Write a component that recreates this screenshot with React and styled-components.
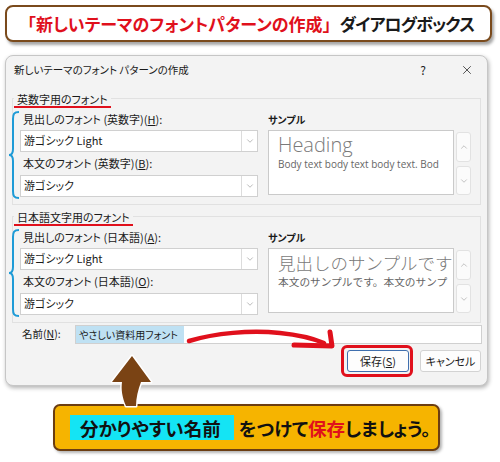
import React from 'react';
import styled, { createGlobalStyle } from 'styled-components';
import { X, ChevronDown, ChevronUp } from 'lucide-react';

const GlobalStyle = createGlobalStyle`
  html, body {
    margin: 0;
    padding: 0;
    background: #fff;
  }

  body {
    font-family: "Noto Sans CJK JP", "Noto Sans", sans-serif;
    font-feature-settings: "palt";
    color: #1a1a1a;
  }
`;

const Page = styled.div`
  position: relative;
  display: flex;
  flex-direction: column;
  width: 500px;
  height: 462px;
  overflow: hidden;
`;

const Banner = styled.div`
  display: flex;
  align-items: center;
  box-sizing: border-box;
  height: 37px;
  margin: 5px 8px 0 5px;
  padding-left: 12px;
  border: 2px solid #7a4a1c;
  border-radius: 8px;
  background: #fff;
  box-shadow: 2px 3px 3px rgba(0, 0, 0, 0.35);
  font-size: 17px;
  font-weight: 700;
  white-space: nowrap;
`;

const Red = styled.span`
  color: #e0101c;
`;

const Bracket = styled.span`
  font-feature-settings: normal;
`;

const Tight = styled.span`
  letter-spacing: -0.9px;
`;

const Dialog = styled.div`
  box-sizing: border-box;
  width: 483px;
  margin: 13px 0 0 5px;
  padding-bottom: 13px;
  border: 1px solid #c6c6c6;
  border-radius: 8px;
  background: #f3f3f3;
  box-shadow: 1px 2px 4px rgba(0, 0, 0, 0.3);
  line-height: 1.2;
`;

const TitleBar = styled.div`
  display: flex;
  align-items: center;
  height: 28px;
  padding: 0 5px 0 8px;
  font-size: 10.5px;
`;

const TitleText = styled.div`
  flex: 1;
`;

const TitleControls = styled.div`
  display: flex;
  gap: 14px;
`;

const TitleButton = styled.div`
  display: flex;
  align-items: center;
  justify-content: center;
  width: 30px;
  height: 20px;
  font-size: 12px;
  color: #222;
`;

const Group = styled.div`
  margin: ${({ $top }) => $top}px 6px 0 6px;
  padding-bottom: 5px;
  border: 1px solid #e1e1e1;
`;

const Legend = styled.div`
  width: max-content;
  margin: -7px 0 0 1px;
  padding: 0 3px;
  line-height: 14px;
  font-size: 11px;
  background: #f3f3f3;
  border-bottom: 2px solid #e0101c;
`;

const Row = styled.div`
  display: flex;
  margin: 2px 0 0 -5px;
`;

const Brace = styled.svg`
  flex: none;
  width: 12px;
  margin-top: 1px;
`;

const Fields = styled.div`
  display: flex;
  flex-direction: column;
  width: 238px;
`;

const FieldLabel = styled.div`
  display: flex;
  align-items: center;
  height: ${({ $h }) => $h}px;
  padding-left: 3px;
  font-size: 11px;
`;

const Select = styled.div`
  display: flex;
  box-sizing: border-box;
  height: 22px;
  border: 1px solid #d0d0d0;
  background: #fff;
`;

const SelectValue = styled.div`
  flex: 1;
  display: flex;
  align-items: center;
  padding-left: 3px;
  font-size: 11px;
`;

const SelectArrow = styled.div`
  display: flex;
  align-items: center;
  justify-content: center;
  width: 15px;
  border-left: 1px solid #dcdcdc;
  color: #8a8a8a;
`;

const SampleColumn = styled.div`
  display: flex;
  flex-direction: column;
  margin-left: 10px;
`;

const SampleLabel = styled.div`
  display: flex;
  align-items: center;
  height: 20px;
  font-size: 10px;
  font-weight: 700;
`;

const SampleRow = styled.div`
  display: flex;
  gap: 2px;
`;

const SampleBox = styled.div`
  box-sizing: border-box;
  width: 186px;
  height: 65px;
  padding: 2px 0 0 9px;
  border: 1px solid #cacaca;
  background: #fff;
  color: #7a7a7a;
  overflow: hidden;
  white-space: nowrap;
`;

const SampleHeading = styled.div`
  font-family: ${({ $jp }) => ($jp ? '"Noto Sans CJK JP", sans-serif' : '"Open Sans", "Noto Sans", sans-serif')};
  font-feature-settings: normal;
  font-weight: 300;
  font-size: ${({ $jp }) => ($jp ? 17.5 : 20)}px;
  line-height: 24px;
`;

const SampleBody = styled.div`
  font-family: ${({ $jp }) => ($jp ? '"Noto Sans CJK JP", sans-serif' : '"Open Sans", "Noto Sans", sans-serif')};
  font-feature-settings: normal;
  font-size: ${({ $jp }) => ($jp ? 10.7 : 10)}px;
  line-height: 14px;
  color: #666;
`;

const Scroller = styled.div`
  display: flex;
  flex-direction: column;
  gap: 4px;
  padding-top: 2px;
`;

const ScrollButton = styled.div`
  display: flex;
  align-items: center;
  justify-content: center;
  box-sizing: border-box;
  width: 15px;
  height: ${({ $h }) => $h}px;
  border: 1px solid #e2e2e2;
  border-radius: 3px;
  background: #fbfbfb;
  color: #9a9a9a;
`;

const NameRow = styled.div`
  display: flex;
  align-items: center;
  height: 19px;
  margin-top: 2px;
  padding-left: 16px;
  font-size: 10.5px;
`;

const NameLabel = styled.div`
  width: 53px;
`;

const NameInput = styled.div`
  display: flex;
  box-sizing: border-box;
  width: 407px;
  height: 19px;
  border: 1px solid #d0d0d0;
  background: #fff;
`;

const Selected = styled.span`
  display: flex;
  align-items: center;
  padding: 0 6px 0 3px;
  background: #bfe1f3;
  font-size: 10px;
`;

const ButtonRow = styled.div`
  display: flex;
  justify-content: flex-end;
  gap: 11px;
  margin-top: 6px;
  padding-right: 6px;
`;

const Highlight = styled.div`
  position: relative;
  display: flex;

  &::after {
    content: '';
    position: absolute;
    inset: -5px -4px -5px -6px;
    border: 3px solid #e0101c;
    border-radius: 6px;
  }
`;

const Button = styled.button`
  width: ${({ $w }) => $w}px;
  height: 22px;
  padding: 0;
  border: 1px solid ${({ $primary }) => ($primary ? '#3f6fae' : '#d3d3d3')};
  border-radius: 3px;
  background: #fdfdfd;
  font-family: inherit;
  font-feature-settings: "palt";
  font-size: 11px;
  color: #1a1a1a;
`;

const Callout = styled.div`
  display: flex;
  align-items: center;
  box-sizing: border-box;
  width: 387px;
  height: 47px;
  margin: 18px 0 0 53px;
  padding-left: 15px;
  border: 2px solid #6b3d12;
  border-radius: 7px;
  background: #f6b400;
  box-shadow: 2px 2px 3px rgba(0, 0, 0, 0.3);
  font-size: 18.5px;
  font-weight: 700;
  color: #111;
  white-space: nowrap;
`;

const Marker = styled.span`
  display: flex;
  align-items: center;
  height: 25px;
  margin-right: 5px;
  padding: 0 13px 0 10px;
  background: #14e4f4;
`;

const Overlay = styled.svg`
  position: absolute;
  top: 0;
  left: 0;
  width: 500px;
  height: 462px;
  pointer-events: none;
`;

const BraceIcon = () => (
  <Brace viewBox="0 0 12 88" height="88">
    <path
      d="M11 1 C6 1 5 3 5 8 L5 38 C5 42 4 44 1 44 C4 44 5 46 5 50 L5 80 C5 85 6 87 11 87"
      fill="none"
      stroke="#1e9bd7"
      strokeWidth="2"
    />
  </Brace>
);

const FontSelect = ({ value }) => (
  <Select>
    <SelectValue>{value}</SelectValue>
    <SelectArrow>
      <ChevronDown size={10} strokeWidth={1.4} />
    </SelectArrow>
  </Select>
);

const FontGroup = ({ title, top, headingLabel, bodyLabel, heading, body, jp }) => (
  <Group $top={top}>
    <Legend>{title}</Legend>
    <Row>
      <BraceIcon />
      <Fields>
        <FieldLabel $h={20}>{headingLabel}</FieldLabel>
        <FontSelect value="游ゴシック Light" />
        <FieldLabel $h={23}>{bodyLabel}</FieldLabel>
        <FontSelect value="游ゴシック" />
      </Fields>
      <SampleColumn>
        <SampleLabel>サンプル</SampleLabel>
        <SampleRow>
          <SampleBox>
            <SampleHeading $jp={jp}>{heading}</SampleHeading>
            <SampleBody $jp={jp}>{body}</SampleBody>
          </SampleBox>
          <Scroller>
            <ScrollButton $h={30}>
              <ChevronUp size={10} strokeWidth={1.4} />
            </ScrollButton>
            <ScrollButton $h={29}>
              <ChevronDown size={10} strokeWidth={1.4} />
            </ScrollButton>
          </Scroller>
        </SampleRow>
      </SampleColumn>
    </Row>
  </Group>
);

const App = () => (
  <Page>
    <GlobalStyle />
    <Banner>
      <Red>
        <Bracket>「</Bracket>新しいテーマのフォントパターンの作成<Bracket>」</Bracket>
      </Red>
      <Tight>ダイアログボックス</Tight>
    </Banner>

    <Dialog>
      <TitleBar>
        <TitleText>新しいテーマのフォント パターンの作成</TitleText>
        <TitleControls>
          <TitleButton>?</TitleButton>
          <TitleButton>
            <X size={14} strokeWidth={1.3} />
          </TitleButton>
        </TitleControls>
      </TitleBar>

      <FontGroup
        top={14}
        title="英数字用のフォント"
        headingLabel={<>見出しのフォント (英数字)(<u>H</u>):</>}
        bodyLabel={<>本文のフォント (英数字)(<u>B</u>):</>}
        heading="Heading"
        body="Body text body text body text. Bod"
      />
      <FontGroup
        top={11}
        jp
        title="日本語文字用のフォント"
        headingLabel={<>見出しのフォント (日本語)(<u>A</u>):</>}
        bodyLabel={<>本文のフォント (日本語)(<u>O</u>):</>}
        heading="見出しのサンプルです"
        body="本文のサンプルです。本文のサンプ"
      />

      <NameRow>
        <NameLabel>名前(<u>N</u>):</NameLabel>
        <NameInput>
          <Selected>やさしい資料用フォント</Selected>
        </NameInput>
      </NameRow>

      <ButtonRow>
        <Highlight>
          <Button $w={62} $primary>保存(<u>S</u>)</Button>
        </Highlight>
        <Button $w={61}>キャンセル</Button>
      </ButtonRow>
    </Dialog>

    <Callout>
      <Marker>分かりやすい名前</Marker>
      <span>
        をつけて<Red>保存</Red>しましょう。
      </span>
    </Callout>

    <Overlay viewBox="0 0 500 462">
      <path
        d="M189 341 C215 333 250 330 280 333 C300 335 312 338 324 343"
        fill="none"
        stroke="#e0101c"
        strokeWidth="4.5"
        strokeLinecap="round"
      />
      <polyline
        points="294,345 332,346 330,332"
        fill="none"
        stroke="#e0101c"
        strokeWidth="5"
        strokeLinecap="round"
        strokeLinejoin="round"
      />
      <path
        d="M126 406 C122 397 121 389 122 382 L112 382 L132 356 L151 382 L141 382 C138 390 136 398 136 406 Z"
        fill="#7a4314"
        stroke="#fff"
        strokeWidth="3"
        strokeLinejoin="round"
        paintOrder="stroke"
      />
    </Overlay>
  </Page>
);

export default App;
